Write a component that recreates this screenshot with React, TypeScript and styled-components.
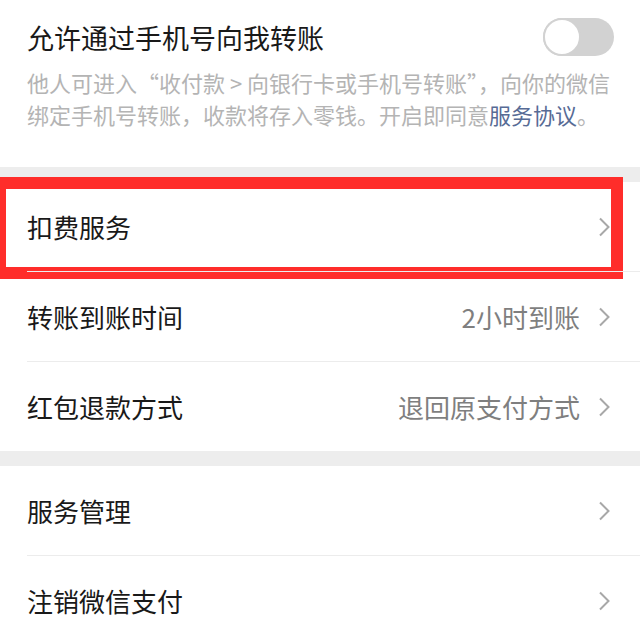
import React from 'react';
import styled, { createGlobalStyle } from 'styled-components';

const GlobalStyle = createGlobalStyle`
    html, body {
        margin: 0;
        padding: 0;
        background: #ffffff;
    }
    body {
        font-family: "Noto Sans CJK SC", "Noto Sans", sans-serif;
        -webkit-font-smoothing: antialiased;
    }
`;

interface IRowItem {
    label: string;
    value?: string;
    highlight?: boolean;
}

const groupOne: IRowItem[] = [
    { label: '扣费服务', highlight: true },
    { label: '转账到账时间', value: '2小时到账' },
    { label: '红包退款方式', value: '退回原支付方式' },
];

const groupTwo: IRowItem[] = [
    { label: '服务管理' },
    { label: '注销微信支付' },
];

const Chevron = () => (
    <svg width="13" height="20" viewBox="0 0 13 20">
        <path d="M2 1.5 L10.5 10 L2 18.5" fill="none" stroke="#a8a8a8" strokeWidth="2" />
    </svg>
);

const App: React.FC = () => {
    /**
     * Renders one group of list rows
     */
    const renderGroup = (rows: IRowItem[]) => (
        <Group>
            {rows.map((row, index) => (
                <Row key={row.label} first={index === 0}>
                    <Label>{row.label}</Label>
                    <Right>
                        {row.value && <Value>{row.value}</Value>}
                        <Chevron />
                    </Right>
                    {row.highlight && <Highlight />}
                </Row>
            ))}
        </Group>
    );

    return (
        <Page>
            <GlobalStyle />
            <TopSection>
                <TitleRow>
                    <Title>允许通过手机号向我转账</Title>
                    <Toggle>
                        <Knob />
                    </Toggle>
                </TitleRow>
                <Description>
                    他人可进入“收付款 &gt; 向银行卡或手机号转账”，向你的微信
                    <br />
                    绑定手机号转账，收款将存入零钱。开启即同意<Link>服务协议</Link>。
                </Description>
            </TopSection>
            <Band />
            {renderGroup(groupOne)}
            <Band />
            {renderGroup(groupTwo)}
        </Page>
    );
};

export default App;

const Page = styled.div`
    width: 640px;
    height: 640px;
    overflow: hidden;
    background: #ffffff;
`;

const TopSection = styled.div`
    height: 167px;
    padding: 20px 26px 0 27px;
    box-sizing: border-box;
`;

const TitleRow = styled.div`
    display: flex;
    align-items: center;
    justify-content: space-between;
    height: 38px;
    margin-top: -2px;
`;

const Title = styled.div`
    font-size: 27px;
    color: #191919;
`;

const Toggle = styled.div`
    width: 71px;
    height: 38px;
    border-radius: 19px;
    background: #d2d2d2;
    display: flex;
    align-items: center;
    box-sizing: border-box;
`;

const Knob = styled.div`
    width: 38px;
    height: 38px;
    border-radius: 50%;
    background: #ffffff;
    border: 2px solid #d2d2d2;
    box-sizing: border-box;
`;

const Description = styled.div`
    margin-top: 10px;
    font-size: 22px;
    line-height: 32px;
    color: #b4b4b4;
    white-space: nowrap;
`;

const Link = styled.span`
    color: #576b95;
`;

const Band = styled.div`
    height: 15px;
    background: #ededed;
`;

const Group = styled.div`
    background: #ffffff;
`;

const Row = styled.div<{ first?: boolean }>`
    position: relative;
    height: 89px;
    display: flex;
    align-items: center;
    justify-content: space-between;
    padding: 0 29px 0 27px;
    margin-top: ${({ first }) => (first ? '0' : '1px')};

    &::before {
        content: '';
        display: ${({ first }) => (first ? 'none' : 'block')};
        position: absolute;
        top: -1px;
        left: 27px;
        right: 0;
        height: 1px;
        background: #ececec;
    }
`;

const Label = styled.div`
    font-size: 26px;
    color: #191919;
`;

const Right = styled.div`
    display: flex;
    align-items: center;
    gap: 18px;
`;

const Value = styled.div`
    font-size: 26px;
    color: #7f7f7f;
`;

const Highlight = styled.div`
    position: absolute;
    top: -5px;
    bottom: -8px;
    left: -6px;
    right: 17px;
    border: 12px solid #ff2d2a;
    pointer-events: none;
`;
